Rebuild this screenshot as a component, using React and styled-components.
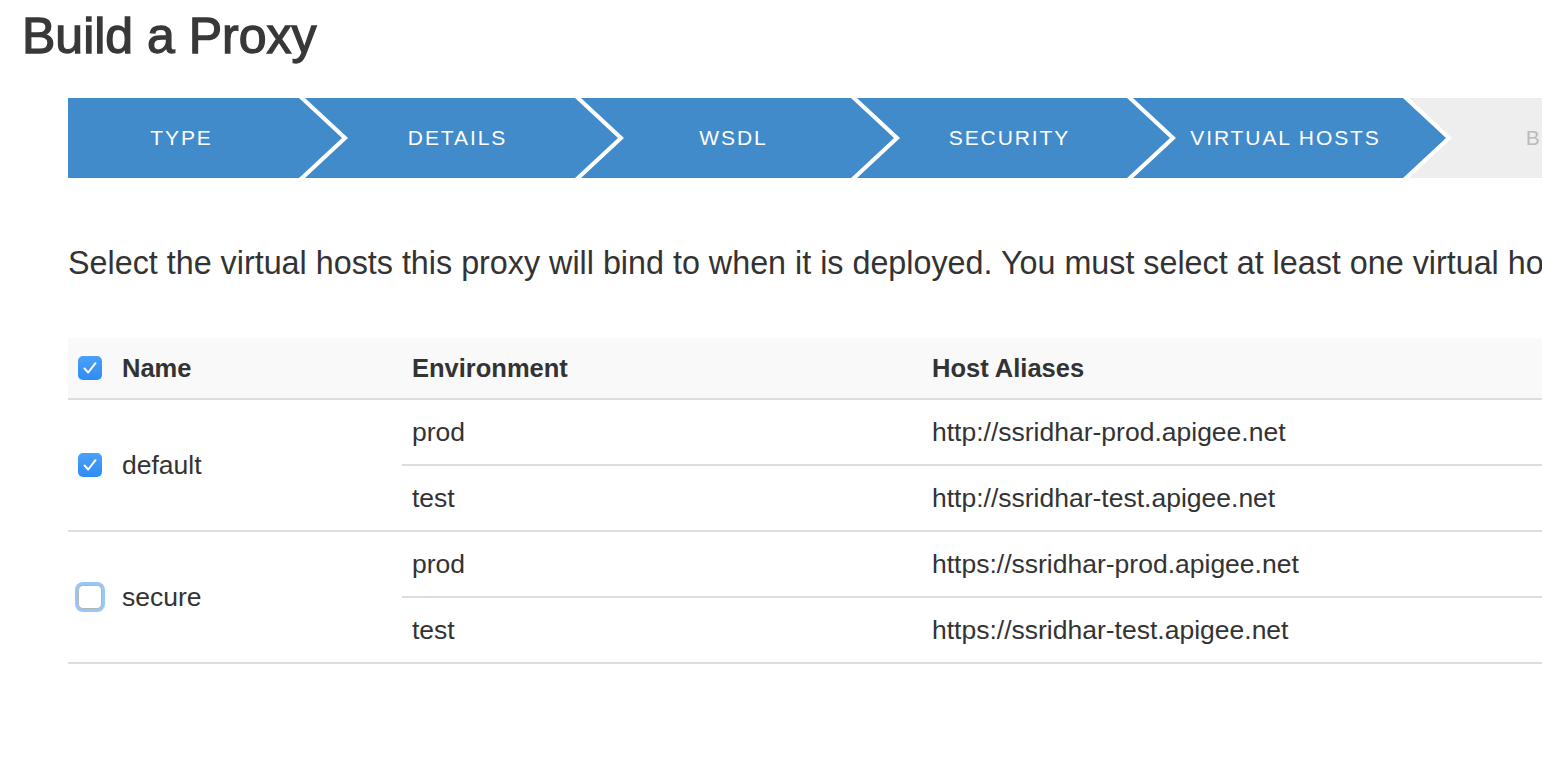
import React from 'react'
import styled, { createGlobalStyle } from 'styled-components'

const GlobalStyle = createGlobalStyle`
    html, body {
        margin: 0;
        padding: 0;
        overflow: hidden;
        background: #fff;
    }
    body {
        font-family: "Liberation Sans", Arial, sans-serif;
        color: #333;
    }
`

const steps = [
    { id: 1, label: 'Type', done: true },
    { id: 2, label: 'Details', done: true },
    { id: 3, label: 'WSDL', done: true },
    { id: 4, label: 'Security', done: true },
    { id: 5, label: 'Virtual Hosts', done: true },
    { id: 6, label: 'Build', done: false },
]

const hosts = [
    {
        name: 'default',
        checked: true,
        envs: [
            { env: 'prod', alias: 'http://ssridhar-prod.apigee.net' },
            { env: 'test', alias: 'http://ssridhar-test.apigee.net' },
        ],
    },
    {
        name: 'secure',
        checked: false,
        envs: [
            { env: 'prod', alias: 'https://ssridhar-prod.apigee.net' },
            { env: 'test', alias: 'https://ssridhar-test.apigee.net' },
        ],
    },
]

const Checkbox = ({ checked }) => (
    <Box checked={checked}>
        {checked && (
            <svg width="16" height="14" viewBox="0 0 16 14">
                <path d="M2.5 7.5 L6.2 11.5 L13.5 2.2" fill="none" stroke="#fff" strokeWidth="2" strokeLinecap="round" strokeLinejoin="round" />
            </svg>
        )}
    </Box>
)

const App = () => {
    return (
        <Page>
            <GlobalStyle />
            <Title>Build a Proxy</Title>
            <Wizard>
                {steps.map((step) => (
                    <Step key={step.id} done={step.done}>{step.label}</Step>
                ))}
            </Wizard>
            <Intro>
                Select the virtual hosts this proxy will bind to when it is deployed. You must select at least one virtual host.
            </Intro>
            <Table>
                <colgroup>
                    <col style={{ width: 334 }} />
                    <col style={{ width: 520 }} />
                    <col />
                </colgroup>
                <thead>
                    <tr>
                        <Th>
                            <NameCell>
                                <Checkbox checked />
                                Name
                            </NameCell>
                        </Th>
                        <Th>Environment</Th>
                        <Th>Host Aliases</Th>
                    </tr>
                </thead>
                <tbody>
                    {hosts.map((host) =>
                        host.envs.map((e, i) => (
                            <tr key={host.name + e.env}>
                                {i === 0 && (
                                    <Td rowSpan={host.envs.length}>
                                        <NameCell>
                                            <Checkbox checked={host.checked} />
                                            {host.name}
                                        </NameCell>
                                    </Td>
                                )}
                                <Td>{e.env}</Td>
                                <Td>{e.alias}</Td>
                            </tr>
                        ))
                    )}
                </tbody>
            </Table>
        </Page>
    )
}

const Page = styled.div`
    width: 1542px;
    height: 758px;
    overflow: hidden;
`

const Title = styled.h1`
    margin: 0 0 0 22px;
    padding-top: 7px;
    font-size: 50px;
    line-height: 58px;
    font-weight: 400;
    color: #383838;
    -webkit-text-stroke: 1.3px #383838;
`

const Wizard = styled.div`
    display: flex;
    margin: 33px 0 0 68px;
    height: 80px;
    overflow: hidden;
`

const Step = styled.div`
    flex: 0 0 313px;
    height: 80px;
    margin-left: -37px;
    padding-right: 8px;
    box-sizing: border-box;
    display: flex;
    align-items: center;
    justify-content: center;
    background: ${(p) => (p.done ? '#428bca' : '#eeeeee')};
    color: ${(p) => (p.done ? '#fff' : '#bbb')};
    font-size: 21px;
    letter-spacing: 1.9px;
    text-transform: uppercase;
    white-space: nowrap;
    clip-path: polygon(0 0, calc(100% - 43px) 0, 100% 50%, calc(100% - 43px) 100%, 0 100%, 43px 50%);

    &:first-child {
        margin-left: -39px;
        clip-path: polygon(0 0, calc(100% - 43px) 0, 100% 50%, calc(100% - 43px) 100%, 0 100%);
    }
`

const Intro = styled.p`
    margin: 65px 0 0 68px;
    font-size: 32.3px;
    line-height: 40px;
    white-space: nowrap;
    color: #333;
`

const Table = styled.table`
    margin: 55px 0 0 68px;
    width: 1700px;
    border-collapse: collapse;
    table-layout: fixed;
`

const Th = styled.th`
    height: 60px;
    padding: 0 10px;
    background: #f9f9f9;
    border-bottom: 2px solid #dddddd;
    text-align: left;
    font-size: 25.5px;
    font-weight: 700;
    color: #333;
`

const Td = styled.td`
    height: 64px;
    padding: 0 10px;
    border-bottom: 2px solid #dddddd;
    font-size: 26.5px;
    color: #333;
    vertical-align: middle;
`

const NameCell = styled.div`
    display: flex;
    align-items: center;
    gap: 20px;
`

const Box = styled.span`
    flex: none;
    width: 24px;
    height: 24px;
    box-sizing: border-box;
    border-radius: 5px;
    display: flex;
    align-items: center;
    justify-content: center;
    background: ${(p) => (p.checked ? 'linear-gradient(#4aa0fb, #2f8cf2)' : '#fff')};
    border: ${(p) => (p.checked ? 'none' : '1px solid #b5b5b5')};
    box-shadow: ${(p) => (p.checked ? 'none' : '0 0 0 3px #98c6f7')};
`

export default App
